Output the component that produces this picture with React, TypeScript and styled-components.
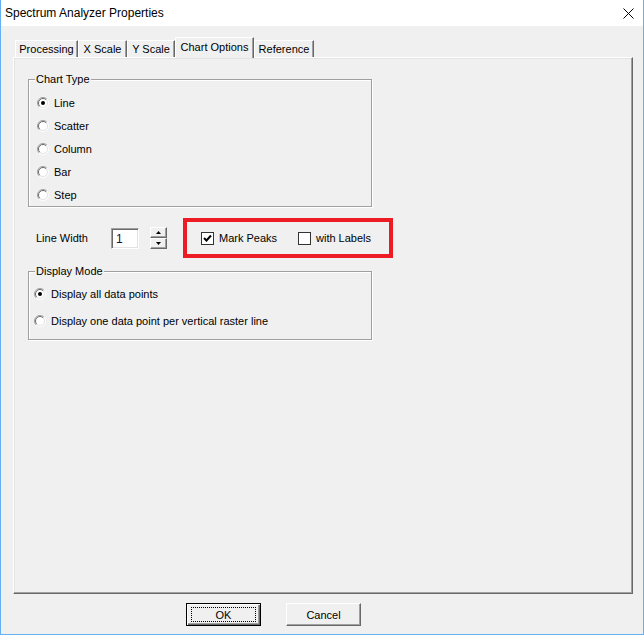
import React from 'react'
import styled, { createGlobalStyle } from 'styled-components'

const GlobalStyle = createGlobalStyle`
  html, body {
    margin: 0;
    padding: 0;
    background: #f0f0f0;
  }
`

const Window = styled.div`
  width: 644px;
  height: 635px;
  box-sizing: border-box;
  border: 1px solid #65b0f2;
  border-top: none;
  background: #f0f0f0;
  display: flex;
  flex-direction: column;
  font-family: 'Liberation Sans', Arial, sans-serif;
  font-size: 11px;
  color: #000;
`

const TitleBar = styled.div`
  height: 26px;
  flex: none;
  background: #fff;
  display: flex;
  align-items: center;
  justify-content: space-between;
  padding: 0 9px 0 4px;
`

const TitleText = styled.div`
  font-size: 12px;
  color: #000;
`

const Body = styled.div`
  flex: 1;
  display: flex;
  flex-direction: column;
  padding: 11px 10px 8px 12px;
`

const TabStrip = styled.div`
  height: 20px;
  display: flex;
  align-items: flex-end;
  padding-left: 2px;
  position: relative;
  z-index: 1;
`

const Tab = styled.div<{ $width: number; $active?: boolean }>`
  box-sizing: border-box;
  width: ${(p) => p.$width}px;
  height: ${(p) => (p.$active ? 21 : 17)}px;
  margin-bottom: ${(p) => (p.$active ? -1 : 0)}px;
  background: #f0f0f0;
  border-top: 1px solid #fff;
  border-left: 1px solid #fff;
  border-right: 1px solid #696969;
  box-shadow: inset -1px 0 0 #a0a0a0;
  display: flex;
  align-items: center;
  justify-content: center;
  padding-bottom: ${(p) => (p.$active ? 3 : 0)}px;
`

const Panel = styled.div`
  height: 537px;
  box-sizing: border-box;
  border: 1px solid;
  border-color: #fff #696969 #696969 #fff;
  box-shadow: inset -1px -1px 0 #a0a0a0, inset 1px 1px 0 #e3e3e3;
  padding: 21px 0 0 14px;
  display: flex;
  flex-direction: column;
`

const GroupBox = styled.div<{ $pad: string }>`
  position: relative;
  width: 344px;
  box-sizing: border-box;
  border: 1px solid #a0a0a0;
  box-shadow: 1px 1px 0 #fff, inset 1px 1px 0 #fff;
  padding: ${(p) => p.$pad};
`

const GroupLabel = styled.span`
  position: absolute;
  top: -7px;
  left: 6px;
  padding: 0 1px;
  line-height: 13px;
  background: #f0f0f0;
`

const OptionRow = styled.div<{ $height: number }>`
  height: ${(p) => p.$height}px;
  display: flex;
  align-items: center;
  gap: 5px;
`

const WidthRow = styled.div`
  margin-top: 11px;
  height: 40px;
  display: flex;
  align-items: center;
  padding-left: 8px;
`

const FieldLabel = styled.span`
  width: 75px;
`

const NumberBox = styled.div`
  box-sizing: border-box;
  width: 28px;
  height: 21px;
  background: #fff;
  border: 1px solid;
  border-color: #a0a0a0 #fff #fff #a0a0a0;
  box-shadow: inset 1px 1px 0 #696969, inset -1px -1px 0 #e3e3e3;
  padding: 3px 0 0 4px;
  font-size: 12px;
  color: #1a0a4a;
`

const Spinner = styled.div`
  margin-left: 11px;
  display: flex;
  flex-direction: column;
`

const SpinButton = styled.div`
  box-sizing: border-box;
  width: 17px;
  height: 11px;
  background: #f0f0f0;
  border: 1px solid;
  border-color: #fff #696969 #696969 #fff;
  box-shadow: inset -1px -1px 0 #a0a0a0;
  display: flex;
  align-items: center;
  justify-content: center;
`

const Highlight = styled.div`
  margin-left: 16px;
  box-sizing: border-box;
  width: 210px;
  height: 40px;
  border: 4px solid #ed1c24;
  display: flex;
  align-items: center;
  padding-left: 14px;
`

const CheckItem = styled.div<{ $width?: number }>`
  display: flex;
  align-items: center;
  gap: 5px;
  width: ${(p) => (p.$width ? `${p.$width}px` : 'auto')};
`

const ButtonRow = styled.div`
  margin-top: 9px;
  display: flex;
  gap: 25px;
  padding-left: 173px;
`

const Button = styled.div<{ $default?: boolean }>`
  box-sizing: border-box;
  width: 75px;
  height: 23px;
  background: #f0f0f0;
  display: flex;
  align-items: center;
  justify-content: center;
  border: 1px solid;
  border-color: ${(p) => (p.$default ? '#000' : '#fff #696969 #696969 #fff')};
  box-shadow: ${(p) =>
    p.$default
      ? 'inset 1px 1px 0 #fff, inset -1px -1px 0 #696969, inset -2px -2px 0 #a0a0a0'
      : 'inset -1px -1px 0 #a0a0a0'};
`

const FocusRect = styled.div`
  box-sizing: border-box;
  width: 65px;
  height: 15px;
  border: 1px dotted #000;
  display: flex;
  align-items: center;
  justify-content: center;
`

const CloseIcon = () => (
  <svg width="11" height="11" viewBox="0 0 11 11">
    <path d="M0.5 0.5 L10.5 10.5 M10.5 0.5 L0.5 10.5" stroke="#000" strokeWidth="1" />
  </svg>
)

const Radio: React.FC<{ checked?: boolean }> = ({ checked }) => (
  <svg width="12" height="12" viewBox="0 0 12 12">
    <circle cx="6" cy="6" r="5" fill="#fff" />
    <path d="M2.1 9.9 A5.5 5.5 0 0 1 9.9 2.1" stroke="#a0a0a0" fill="none" />
    <path d="M9.9 2.1 A5.5 5.5 0 0 1 2.1 9.9" stroke="#fff" fill="none" />
    <path d="M2.8 9.2 A4.5 4.5 0 0 1 9.2 2.8" stroke="#696969" fill="none" />
    <path d="M9.2 2.8 A4.5 4.5 0 0 1 2.8 9.2" stroke="#e3e3e3" fill="none" />
    {checked && <circle cx="6" cy="6" r="2" fill="#000" />}
  </svg>
)

const Checkbox: React.FC<{ checked?: boolean }> = ({ checked }) => (
  <svg width="13" height="13" viewBox="0 0 13 13">
    <rect x="0.5" y="0.5" width="12" height="12" fill="#fff" stroke="#333" />
    {checked && (
      <path d="M3 6 L5.5 8.5 L10 3.5" stroke="#000" strokeWidth="2" fill="none" />
    )}
  </svg>
)

const Arrow: React.FC<{ up?: boolean }> = ({ up }) => (
  <svg width="5" height="3" viewBox="0 0 5 3">
    <path d={up ? 'M2.5 0 L5 3 L0 3 Z' : 'M0 0 L5 0 L2.5 3 Z'} fill="#000" />
  </svg>
)

const chartTypes = ['Line', 'Scatter', 'Column', 'Bar', 'Step']
const displayModes = [
  'Display all data points',
  'Display one data point per vertical raster line',
]

const tabs = [
  { label: 'Processing', width: 63 },
  { label: 'X Scale', width: 49 },
  { label: 'Y Scale', width: 48 },
  { label: 'Chart Options', width: 79, active: true },
  { label: 'Reference', width: 60 },
]

export default function App() {
  return (
    <>
      <GlobalStyle />
      <Window>
        <TitleBar>
          <TitleText>Spectrum Analyzer Properties</TitleText>
          <CloseIcon />
        </TitleBar>
        <Body>
          <TabStrip>
            {tabs.map((t) => (
              <Tab key={t.label} $width={t.width} $active={t.active}>
                {t.label}
              </Tab>
            ))}
          </TabStrip>
          <Panel>
            <GroupBox $pad="11px 0 0 8px">
              <GroupLabel>Chart Type</GroupLabel>
              {chartTypes.map((c, i) => (
                <OptionRow key={c} $height={23}>
                  <Radio checked={i === 0} />
                  <span>{c}</span>
                </OptionRow>
              ))}
            </GroupBox>
            <WidthRow>
              <FieldLabel>Line Width</FieldLabel>
              <NumberBox>1</NumberBox>
              <Spinner>
                <SpinButton>
                  <Arrow up />
                </SpinButton>
                <SpinButton>
                  <Arrow />
                </SpinButton>
              </Spinner>
              <Highlight>
                <CheckItem $width={97}>
                  <Checkbox checked />
                  <span>Mark Peaks</span>
                </CheckItem>
                <CheckItem>
                  <Checkbox />
                  <span>with Labels</span>
                </CheckItem>
              </Highlight>
            </WidthRow>
            <GroupBox $pad="8px 0 5px 5px" style={{ marginTop: 13 }}>
              <GroupLabel>Display Mode</GroupLabel>
              {displayModes.map((m, i) => (
                <OptionRow key={m} $height={27}>
                  <Radio checked={i === 0} />
                  <span>{m}</span>
                </OptionRow>
              ))}
            </GroupBox>
          </Panel>
          <ButtonRow>
            <Button $default>
              <FocusRect>OK</FocusRect>
            </Button>
            <Button>Cancel</Button>
          </ButtonRow>
        </Body>
      </Window>
    </>
  )
}
